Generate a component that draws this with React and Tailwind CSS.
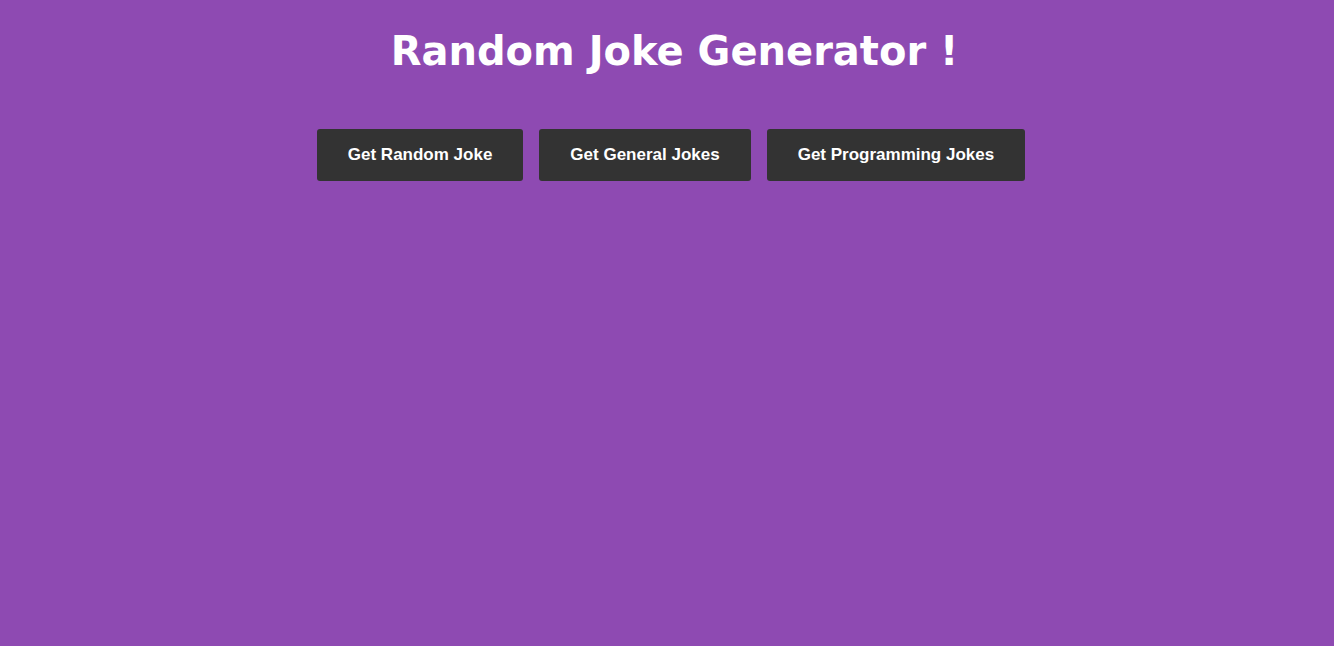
export default function App() {
  const buttons = ['Get Random Joke', 'Get General Jokes', 'Get Programming Jokes'];

  return (
    <div className="min-h-screen bg-[#8e4ab2] text-white">
      <h1 className="pt-[21px] pl-[15px] text-center text-[40px] font-bold leading-[60px] font-['DejaVu_Sans',Verdana,sans-serif]">
        Random Joke Generator !
      </h1>
      <div className="mt-[48px] flex justify-center gap-[16px] pl-[8px]">
        {buttons.map((label) => (
          <button
            key={label}
            type="button"
            className="h-[52px] rounded-[3px] bg-[#333333] px-[31px] text-[17px] font-bold text-white font-['Liberation_Sans',Arial,sans-serif]"
          >
            {label}
          </button>
        ))}
      </div>
    </div>
  );
}
